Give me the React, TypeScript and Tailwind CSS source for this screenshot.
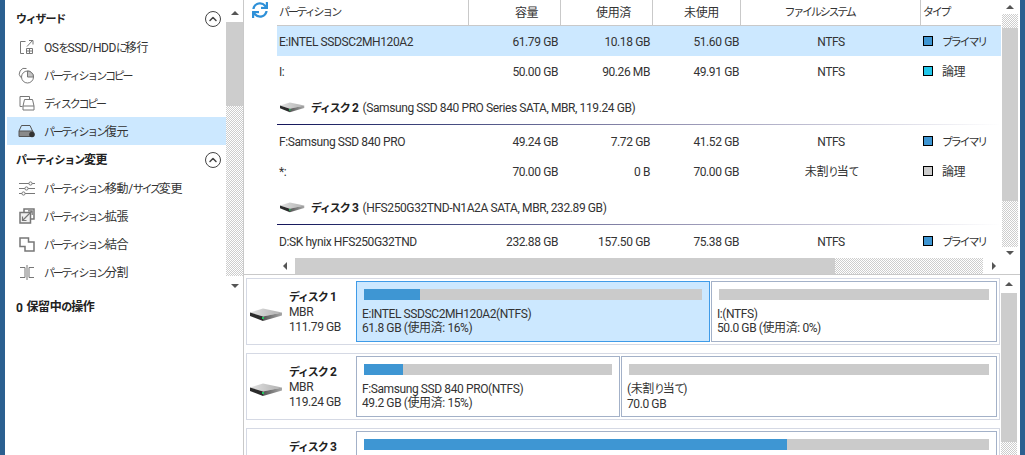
import { FaSync } from "react-icons/fa";
import { ChevronUp } from "lucide-react";

const font = "font-['Roboto','Noto_Sans_CJK_JP',sans-serif] tracking-[-0.4px]";

// kana in the reference are narrower than kanji, so split them out
const JP = ({ text, bold = false }: { text: string; bold?: boolean }) => (
  <>
    {text.split(/([\u3040-\u30ff]+)/).map((part, i) =>
      i % 2 === 1 ? (
        <span key={i} className={bold ? "text-[11px] tracking-[-1.2px]" : "text-[11px] tracking-[-2.2px]"}>
          {part}
        </span>
      ) : (
        <span key={i}>{part}</span>
      ),
    )}
  </>
);

const MoveIcon = () => (
  <svg width="16" height="16" viewBox="0 0 16 16" fill="none" stroke="#777" strokeWidth="1">
    <path d="M6.5 2.5H1.5V14.5H5" />
    <path d="M8 7.5L13.5 1.5M10 1.5H14V5.5" />
    <path d="M7.5 9.5H13.5V14.5H7.5ZM7.5 12H13.5M10.5 9.5V14.5" />
  </svg>
);

const CopyPartIcon = () => (
  <svg width="17" height="17" viewBox="0 0 17 17" fill="none" stroke="#777" strokeWidth="1">
    <path d="M2.8 10.5A5.5 5.5 0 0 1 8.5 1.5" />
    <circle cx="9.5" cy="10" r="6" fill="#fff" />
    <path d="M9.5 10V4A6 6 0 0 1 15.5 10Z" fill="#c4c4c4" />
  </svg>
);

const DiskCopyIcon = () => (
  <svg width="16" height="16" viewBox="0 0 16 16" fill="none" stroke="#777" strokeWidth="1">
    <path d="M3.5 11.5H1V1.5H10.5V4" />
    <path d="M5.5 4.5H13.5L15 11V15H4V11ZM4 11H15" fill="#fff" />
  </svg>
);

const RestoreIcon = () => (
  <svg width="18" height="14" viewBox="0 0 18 14" fill="none" stroke="#555" strokeWidth="1">
    <path d="M1 7L3.5 1.5H12L14.5 7" />
    <path d="M1 7H15V12.5H1Z" fill="#8a8a8a" />
    <circle cx="14" cy="10.5" r="2.8" fill="#333" stroke="none" />
  </svg>
);

const ResizeIcon = () => (
  <svg width="16" height="15" viewBox="0 0 16 15" fill="none" stroke="#777" strokeWidth="1">
    <path d="M0 2.5H16M0 7.5H16M0 12.5H16" />
    <circle cx="11.5" cy="2.5" r="1.6" fill="#fff" />
    <circle cx="7.5" cy="7.5" r="1.6" fill="#fff" />
    <circle cx="4.5" cy="12.5" r="1.6" fill="#fff" />
  </svg>
);

const ExtendIcon = () => (
  <svg width="16" height="16" viewBox="0 0 16 16" fill="none" stroke="#777" strokeWidth="1.5">
    <path d="M5 4V1H15V11H12" />
    <path d="M1 4.5H11.5V15H1Z" fill="#f0f0f0" />
    <path d="M3.5 12.5L13 3M9 2.8H13.2V7M3.5 8.5V12.5H7.5" strokeWidth="1.2" />
  </svg>
);

const MergeIcon = () => (
  <svg width="16" height="15" viewBox="0 0 16 15" fill="none" stroke="#777" strokeWidth="1.5">
    <path d="M1 1H9.5V5H15V14H6V9.5H1Z" />
  </svg>
);

const SplitIcon = () => (
  <svg width="16" height="15" viewBox="0 0 16 15" fill="none" stroke="#777" strokeWidth="1">
    <path d="M1 2.5H6V12.5H1M15 2.5H10V12.5H15M8 0V15" />
  </svg>
);

const DiskIcon = ({ small = false, id }: { small?: boolean; id: string }) => (
  <svg width={small ? 25 : 33} height={small ? 11 : 14} viewBox="0 0 33 14" preserveAspectRatio="none">
    <defs>
      <linearGradient id={`top-${id}`} x1="0" x2="1" y1="0" y2="0">
        <stop offset="0" stopColor="#e2e2e2" />
        <stop offset="1" stopColor="#b0b0b0" />
      </linearGradient>
      <linearGradient id={`side-${id}`} x1="0" x2="1" y1="0" y2="0">
        <stop offset="0" stopColor="#555" />
        <stop offset="1" stopColor="#a8a8a8" />
      </linearGradient>
    </defs>
    <path d="M0 4.5L13 .5L32 4.5L13 8.5Z" fill={`url(#top-${id})`} />
    <path d="M0 4.5L13 8.5V13L0 8Z" fill="#2b2b2b" />
    <path d="M13 8.5L32 4.5V7.5L13 13Z" fill={`url(#side-${id})`} />
    <rect x="12" y="9" width="2" height="2" fill="#22c55e" />
  </svg>
);

const dither = "bg-[repeating-conic-gradient(#cdcdcd_0_25%,#fff_0_50%)] bg-[length:2px_2px]";

const Arrow = ({ dir }: { dir: "up" | "down" | "left" | "right" }) => {
  if (dir === "up") return <div className="h-0 w-0 border-x-[4px] border-b-[4px] border-x-transparent border-b-[#555]" />;
  if (dir === "down") return <div className="h-0 w-0 border-x-[4px] border-t-[4px] border-x-transparent border-t-[#555]" />;
  if (dir === "left") return <div className="h-0 w-0 border-y-[4px] border-r-[4px] border-y-transparent border-r-[#555]" />;
  return <div className="h-0 w-0 border-y-[4px] border-l-[4px] border-y-transparent border-l-[#555]" />;
};

const sideTop = [
  { icon: <MoveIcon />, label: "OSをSSD/HDDに移行" },
  { icon: <CopyPartIcon />, label: "パーティションコピー" },
  { icon: <DiskCopyIcon />, label: "ディスクコピー" },
  { icon: <RestoreIcon />, label: "パーティション復元", active: true },
];

const sideBottom = [
  { icon: <ResizeIcon />, label: "パーティション移動/サイズ変更" },
  { icon: <ExtendIcon />, label: "パーティション拡張" },
  { icon: <MergeIcon />, label: "パーティション結合" },
  { icon: <SplitIcon />, label: "パーティション分割" },
];

const SideItem = ({ icon, label, active }: { icon: React.ReactNode; label: string; active?: boolean }) => (
  <div className={`flex h-[28px] items-center ${active ? "bg-[#cce8ff]" : ""}`}>
    <div className="flex w-[37px] justify-center pr-[1px] pl-[3px]">{icon}</div>
    <span className="pt-[2px] text-[12px] whitespace-nowrap text-[#333]">
      <JP text={label} />
    </span>
  </div>
);

const SideHeader = ({ label }: { label: string }) => (
  <div className="flex h-[29px] items-center justify-between pr-[5px] pl-[9px]">
    <span className="pt-[2px] text-[12px] font-bold text-[#222]">
      <JP text={label} bold />
    </span>
    <div className="flex h-[16px] w-[16px] items-center justify-center rounded-full border border-[#444]">
      <ChevronUp size={12} strokeWidth={3} color="#444" />
    </div>
  </div>
);

const Sidebar = () => (
  <div className="flex w-[238px] shrink-0">
    <div className="w-[221px] pt-[4px]">
      <div className="ml-[2px]">
        <SideHeader label="ウィザード" />
        {sideTop.map((s) => (
          <SideItem key={s.label} {...s} />
        ))}
        <SideHeader label="パーティション変更" />
        {sideBottom.map((s) => (
          <SideItem key={s.label} {...s} />
        ))}
        <div className="mt-[6px] flex h-[28px] items-center pt-[3px] pl-[9px] text-[12px] font-bold text-[#222]">
          <span>0</span>
          <span className="ml-[4px]">
            <JP text="保留中の操作" bold />
          </span>
        </div>
      </div>
    </div>
    <div className="flex h-[295px] w-[17px] flex-col">
      <div className="flex h-[22px] items-center justify-center pt-[3px]">
        <Arrow dir="up" />
      </div>
      <div className="h-[84px] bg-[#cdcdcd]" />
      <div className={`h-[170px] ${dither}`} />
      <div className="flex h-[19px] items-center justify-center">
        <Arrow dir="down" />
      </div>
    </div>
  </div>
);

const cols = "grid grid-cols-[192px_92px_92px_88px_180px_80px]";

type Row = {
  name: string;
  cap: string;
  used: string;
  free: string;
  fs: string;
  type: string;
  color: string;
  active?: boolean;
};

const PartRow = ({ row }: { row: Row }) => (
  <div className={`${cols} h-[30px] items-center text-[12px] text-[#333] ${row.active ? "bg-[#cce8ff]" : ""}`}>
    <div className="pt-[2px] pl-[2px] whitespace-nowrap">{row.name}</div>
    <div className="pt-[2px] pr-[3px] text-right">{row.cap}</div>
    <div className="pt-[2px] pr-[3px] text-right">{row.used}</div>
    <div className="pt-[2px] pr-[2px] text-right">{row.free}</div>
    <div className="pt-[2px] text-center whitespace-nowrap">
      <JP text={row.fs} />
    </div>
    <div className="flex items-center pl-[2px] whitespace-nowrap">
      <div className={`h-[10px] w-[10px] shrink-0 border border-black ${row.color}`} />
      <span className="ml-[9px] pt-[2px]">
        <JP text={row.type} />
      </span>
    </div>
  </div>
);

const GroupHead = ({ num, desc }: { num: string; desc: string }) => (
  <div className="flex h-[39px] flex-col">
    <div className="flex flex-1 items-center pt-[5px] pl-[3px] text-[12px] text-[#333]">
      <DiskIcon small id={`g${num}`} />
      <span className="ml-[6px] pt-[1px] font-bold text-[#222]">
        <JP text={`ディスク ${num}`} bold />
      </span>
      <span className="ml-[4px] pt-[1px] whitespace-nowrap">{desc}</span>
    </div>
    <div className="h-[1px] bg-gradient-to-r from-[#14145a] via-[#8a88aa] to-[#ffffff]" />
  </div>
);

const HeadCell = ({ label, align, last = false }: { label: string; align: string; last?: boolean }) => (
  <div className={`flex h-full items-center ${align} ${last ? "" : "border-r border-[#c9c9c9]"}`}>
    <span className="whitespace-nowrap">
      <JP text={label} />
    </span>
  </div>
);

const TopPanel = () => (
  <div className="flex h-[275px] shrink-0 border-b border-[#c9c9c9]">
    <div className="flex min-w-0 flex-1 flex-col">
      <div className="flex min-h-0 flex-1">
        <div className="w-[33px] shrink-0 pt-[2px] pl-[8px]">
          <FaSync size={16} color="#2e90d8" />
        </div>
        <div className="w-[724px]">
          <div className={`${cols} h-[26px] items-center border-b border-[#c9c9c9] text-[12px] text-[#333]`}>
            <HeadCell label="パーティション" align="pl-[2px]" />
            <HeadCell label="容量" align="justify-center pl-[24px]" />
            <HeadCell label="使用済" align="justify-center pl-[14px]" />
            <HeadCell label="未使用" align="justify-center pl-[10px]" />
            <HeadCell label="ファイルシステム" align="justify-center pr-[22px]" />
            <HeadCell label="タイプ" align="pl-[2px]" last />
          </div>
          <PartRow row={{ name: "E:INTEL SSDSC2MH120A2", cap: "61.79 GB", used: "10.18 GB", free: "51.60 GB", fs: "NTFS", type: "プライマリ", color: "bg-[#3e96d3]", active: true }} />
          <PartRow row={{ name: "I:", cap: "50.00 GB", used: "90.26 MB", free: "49.91 GB", fs: "NTFS", type: "論理", color: "bg-[#22c7ea]" }} />
          <GroupHead num="2" desc="(Samsung SSD 840 PRO Series SATA, MBR, 119.24 GB)" />
          <div className="pt-[1px]">
            <PartRow row={{ name: "F:Samsung SSD 840 PRO", cap: "49.24 GB", used: "7.72 GB", free: "41.52 GB", fs: "NTFS", type: "プライマリ", color: "bg-[#3e96d3]" }} />
            <PartRow row={{ name: "*:", cap: "70.00 GB", used: "0 B", free: "70.00 GB", fs: "未割り当て", type: "論理", color: "bg-[#cccccc]" }} />
          </div>
          <GroupHead num="3" desc="(HFS250G32TND-N1A2A SATA, MBR, 232.89 GB)" />
          <div className="pt-[1px]">
            <PartRow row={{ name: "D:SK hynix HFS250G32TND", cap: "232.88 GB", used: "157.50 GB", free: "75.38 GB", fs: "NTFS", type: "プライマリ", color: "bg-[#3e96d3]" }} />
          </div>
        </div>
      </div>
      <div className="flex h-[16px] shrink-0">
        <div className="flex w-[51px] shrink-0 items-center justify-end pr-[8px]">
          <Arrow dir="left" />
        </div>
        <div className="w-[540px] bg-[#cdcdcd]" />
        <div className={`w-[148px] ${dither}`} />
        <div className="flex w-[18px] items-center justify-center pl-[3px]">
          <Arrow dir="right" />
        </div>
      </div>
    </div>
    <div className="flex w-[16px] shrink-0 flex-col">
      <div className="flex h-[14px] items-center justify-center">
        <Arrow dir="up" />
      </div>
      <div className={`h-[14px] ${dither}`} />
      <div className="h-[173px] bg-[#cdcdcd]" />
      <div className={`h-[46px] ${dither}`} />
      <div className="flex h-[12px] items-center justify-center">
        <Arrow dir="down" />
      </div>
    </div>
    <div className="w-[2px] shrink-0" />
  </div>
);

type Part = { w: string; fill: string; line1?: string; line2?: string; active?: boolean };

const PartBox = ({ p }: { p: Part }) => (
  <div className={`h-[61px] shrink-0 border px-[7px] pt-[7px] ${p.w} ${p.active ? "border-[#3f9be8] bg-[#cce8ff]" : "border-[#a3b1c8] bg-white"}`}>
    <div className="h-[11px] bg-[#cbcbcb]">
      <div className={`h-full bg-[#3e96d3] ${p.fill}`} />
    </div>
    {p.line1 && (
      <div className="mt-[7px] ml-[-2px] text-[12px] leading-[14px] whitespace-nowrap text-[#333]">
        <div>
          <JP text={p.line1} />
        </div>
        <div>{p.line2}</div>
      </div>
    )}
  </div>
);

const DiskCard = ({ num, size, parts }: { num: string; size?: string; parts: Part[] }) => (
  <div className="flex h-[67px] w-[754px] shrink-0 border border-[#d5d9e4] pt-[2px]">
    <div className="relative w-[109px] shrink-0">
      {size && (
        <div className="absolute top-[27px] left-[3px]">
          <DiskIcon id={`c${num}`} />
        </div>
      )}
      <div className="ml-[42px] text-[12px] leading-[15px] text-[#333]">
        <div className="pt-[9px] font-bold text-[#222]">
          <JP text={`ディスク ${num}`} bold />
        </div>
        {size && <div>MBR</div>}
        {size && <div>{size}</div>}
      </div>
    </div>
    <div className="flex gap-[1px]">
      {parts.map((p, i) => (
        <PartBox key={i} p={p} />
      ))}
    </div>
  </div>
);

const BottomPanel = () => (
  <div className="flex min-h-0 flex-1">
    <div className="flex w-[757px] shrink-0 flex-col gap-[8px] pt-[3px] pl-[2px]">
      <DiskCard
        num="1"
        size="111.79 GB"
        parts={[
          { w: "w-[354px]", fill: "w-[16.5%]", line1: "E:INTEL SSDSC2MH120A2(NTFS)", line2: "61.8 GB (使用済: 16%)", active: true },
          { w: "w-[286px]", fill: "w-0", line1: "I:(NTFS)", line2: "50.0 GB (使用済: 0%)" },
        ]}
      />
      <DiskCard
        num="2"
        size="119.24 GB"
        parts={[
          { w: "w-[264px]", fill: "w-[15.7%]", line1: "F:Samsung SSD 840 PRO(NTFS)", line2: "49.2 GB (使用済: 15%)" },
          { w: "w-[376px]", fill: "w-0", line1: "(未割り当て)", line2: "70.0 GB" },
        ]}
      />
      <DiskCard num="3" parts={[{ w: "w-[641px]", fill: "w-[67.7%]" }]} />
    </div>
    <div className="flex w-[16px] shrink-0 flex-col">
      <div className="flex h-[18px] items-center justify-center">
        <Arrow dir="up" />
      </div>
      <div className="h-[149px] bg-[#cdcdcd]" />
      <div className={`flex-1 ${dither}`} />
    </div>
    <div className="w-[2px] shrink-0" />
  </div>
);

export default function App() {
  return (
    <div className={`flex h-[455px] w-[1025px] overflow-hidden bg-white ${font}`}>
      <div className="w-[5px] shrink-0 bg-[#2b6090]" />
      <Sidebar />
      <div className="flex w-[777px] shrink-0 flex-col overflow-hidden border-l border-[#c9c9c9]">
        <TopPanel />
        <BottomPanel />
      </div>
      <div className="w-[5px] shrink-0 bg-[#2b6090]" />
    </div>
  );
}
